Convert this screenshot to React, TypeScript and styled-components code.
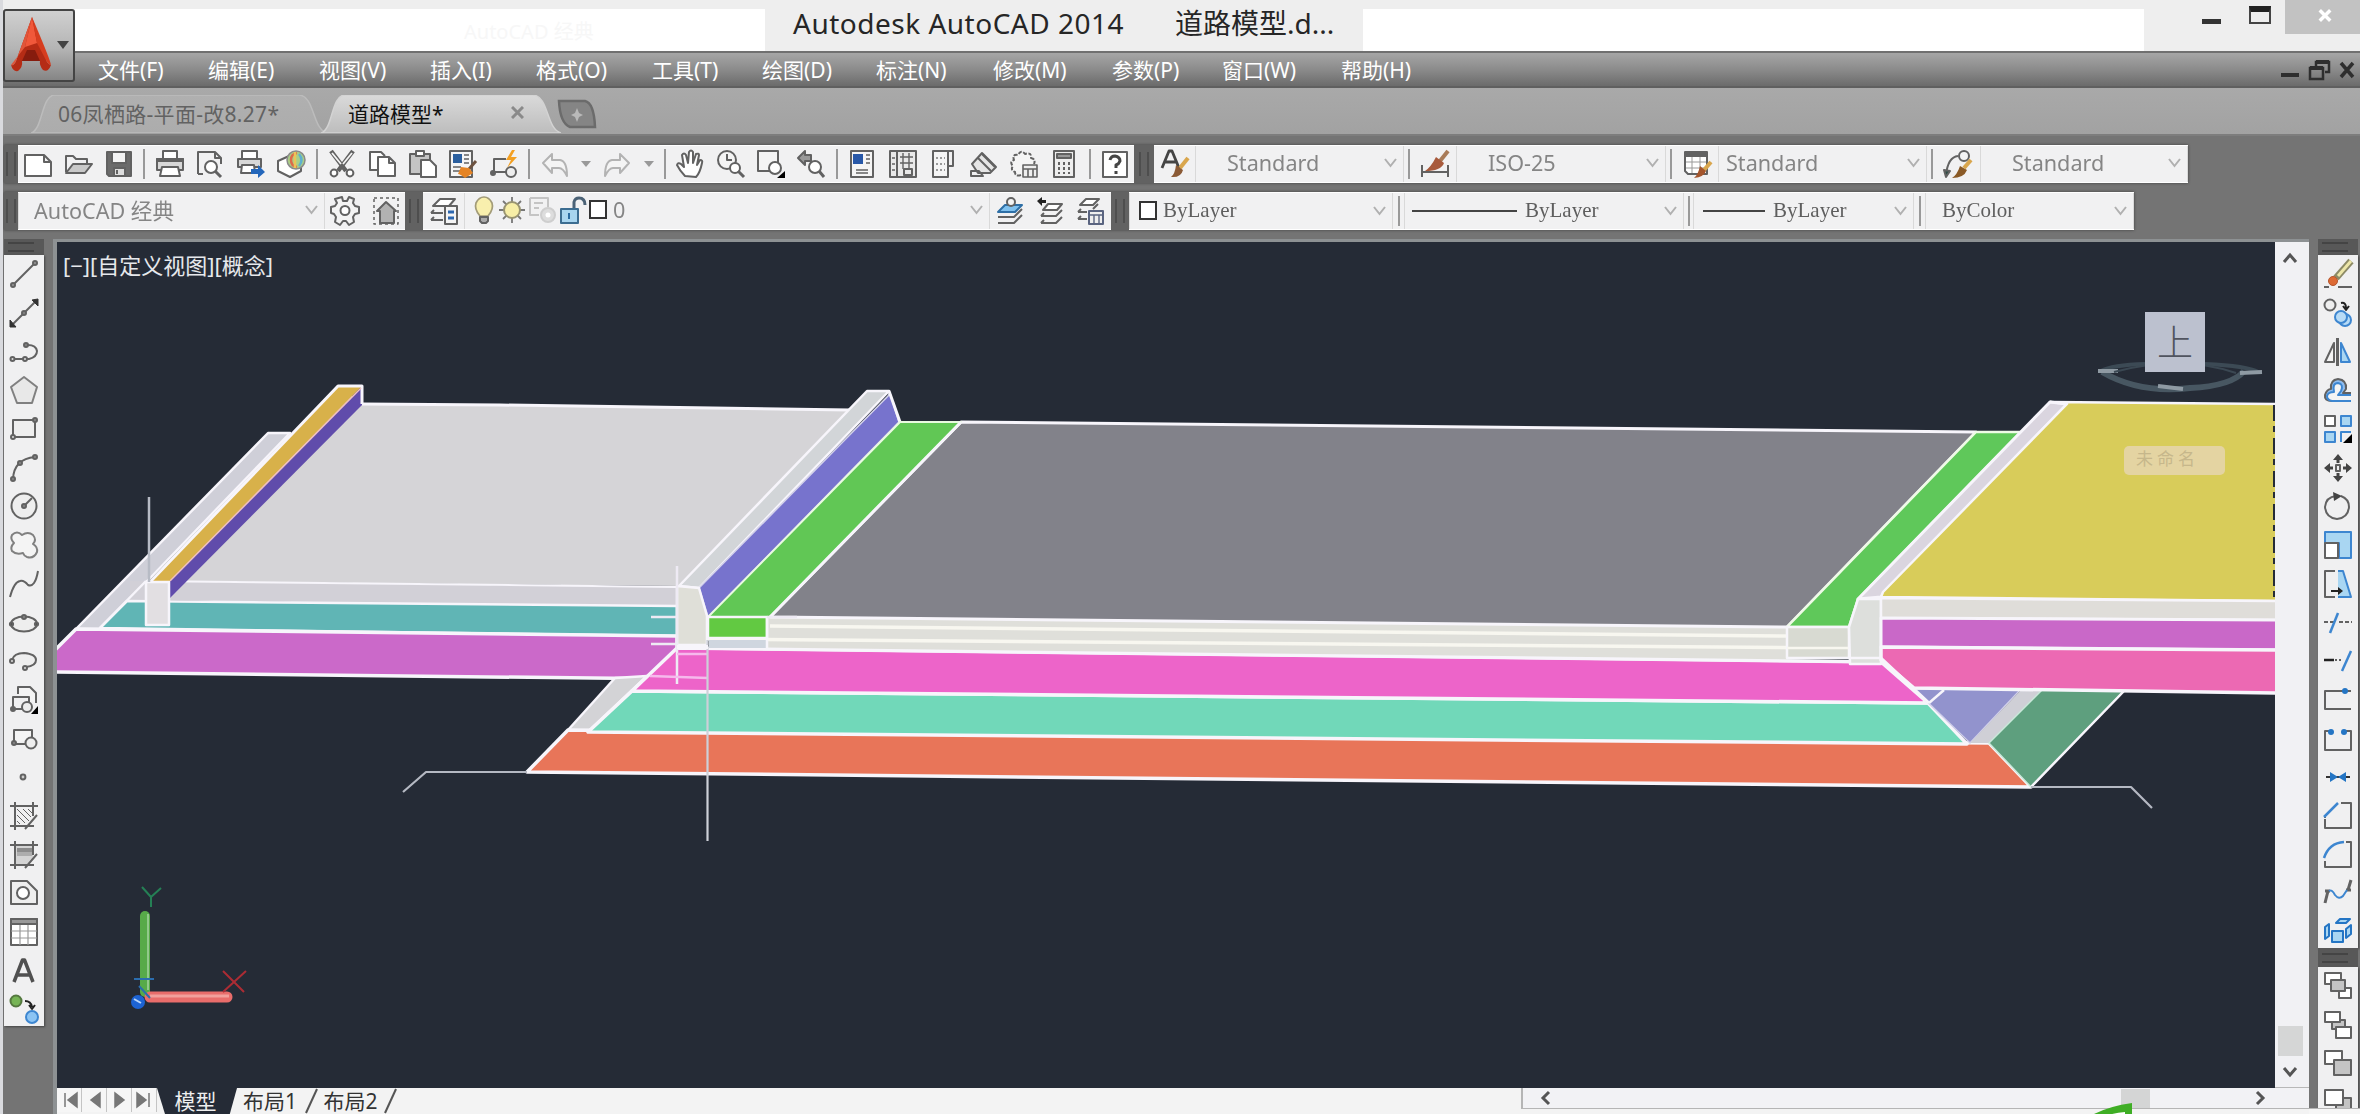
import React from "react";
import styled, { createGlobalStyle } from "styled-components";

const SANS = '"Noto Sans", "Noto Sans CJK SC", sans-serif';
const SERIF = '"Liberation Serif", "Noto Sans CJK SC", serif';

const Global = createGlobalStyle`
  html, body { margin: 0; padding: 0; background: #747474; }
  * { box-sizing: border-box; }
`;

/* ---------- icons (28 x 28 grid) ---------- */
const K = "#626262";
const B = "#3d86d0";
const L = "#a9d6f2";

const icons: Record<string, React.ReactNode> = {
  new: <path d="M1 5h19l7 7v14H1zM20 5v7h7" fill="#fff" />,
  open: (
    <>
      <path d="M1 22V6h7l3 3h11v5" />
      <path d="M1 23 8 14h19l-7 9z" fill="#c9c9c9" />
    </>
  ),
  save: (
    <>
      <path d="M2 2h24v24H4l-2-2z" fill="#6b6b6b" />
      <path d="M7 2h14v11H7z" fill="#f4f4f4" />
      <path d="M9 18h11v8H9z" fill="#ddd" />
      <path d="M12 20v4" />
    </>
  ),
  print: (
    <>
      <path d="M7 8V1h14v7" fill="#fff" />
      <path d="M1 9h26v11H1z" fill="#d8d8d8" />
      <path d="M1 9h26v2H1z" fill={K} />
      <path d="M6 17h16l2 9H4z" fill="#fff" />
    </>
  ),
  preview: (
    <>
      <path d="M2 24V2h17l6 6v6M2 24h5" />
      <path d="M19 2v6h6" />
      <circle cx="15" cy="17" r="6" fill="#fff" />
      <path d="m19 21 6 6" strokeWidth="3" />
    </>
  ),
  publish: (
    <>
      <path d="M5 8V1h15v7" fill="#fff" />
      <path d="M1 9h23v8H1z" fill="#d8d8d8" />
      <path d="M5 15h12l1 8H4z" fill="#fff" />
      <path d="M14 19h7v-4l7 7-7 6v-4h-7z" fill="#2467bb" stroke="none" />
    </>
  ),
  globe: (
    <>
      <path d="M1 11 12 6l12 5v10l-11 6-12-6z" fill="#fff" />
      <circle cx="19" cy="10" r="9" fill="#a9cf86" stroke="#8a8a8a" strokeWidth="1.500" />
      <path d="M20 3q-6 1-6 7t6 7" stroke="#dd6a4a" strokeWidth="2.500" />
      <path d="M18 2v16" stroke="#ecc458" strokeWidth="2.500" />
      <path d="M22 4q5 6 0 12" stroke="#5fb0cf" strokeWidth="2.500" />
    </>
  ),
  cut: (
    <>
      <path d="M3 1 18 21M25 1 10 21" strokeWidth="4.500" />
      <path d="M4 3 13 14M24 3l-9 11" stroke="#f4f4f4" strokeWidth="1.800" />
      <circle cx="6" cy="23" r="3.400" fill="#fff" />
      <circle cx="22" cy="23" r="3.400" fill="#fff" />
    </>
  ),
  copy: (
    <>
      <path d="M8 20H1V2h11l4 4" fill="#fff" />
      <path d="M9 7h11l6 6v13H9zM20 7v6h6" fill="#fff" />
    </>
  ),
  paste: (
    <>
      <path d="M1 4h20v20H1z" fill="#c4c4c4" />
      <path d="M7 1h8v5H7z" fill="#fff" />
      <path d="M12 10h9l6 6v11H12z" fill="#fff" />
    </>
  ),
  match: (
    <>
      <path d="M1 1h22v26H1z" fill="#f5f5f5" />
      <path d="M4 4h9v9H4z" fill="#2b5f9e" stroke="none" />
      <path d="M15 5h5M15 9h5M15 13h5M4 17h8M4 21h7" strokeWidth="1.400" />
      <path d="m27 11-7 8" stroke="#6c5240" strokeWidth="3" />
      <path d="m12 17 8 1 4 5-8 5q-5-4-7-4z" fill="#e58425" stroke="none" />
    </>
  ),
  blockedit: (
    <>
      <path d="M4 22V9h12M5 22h11" />
      <circle cx="3" cy="23" r="2" fill={K} />
      <circle cx="21" cy="22" r="5" fill="#eee" />
      <path d="m22 0-6 10h5l-4 8 10-11h-6l4-7z" fill="#f3a023" stroke="none" />
    </>
  ),
  undo: <path d="m2 13 9-9v6h8q7 1 7 16-4-8-8-8h-7v5z" fill="#f4f4f4" stroke="#b3b3b3" />,
  redo: <path d="m26 13-9-9v6H9q-7 1-7 16 4-8 8-8h7v5z" fill="#f4f4f4" stroke="#b3b3b3" />,
  hand: (
    <path
      d="M9 26Q4 21 1 15q1-3 4-1l3 3L6 5q2-3 4 0l2 8 1-11q2-3 4 0v11l3-9q3-1 3 1l-2 10 3-5q3 0 2 3-2 10-6 14z"
      fill="#fff"
    />
  ),
  zoomrt: (
    <>
      <circle cx="10" cy="10" r="9" fill="#f4f4f4" />
      <path d="M10 4v6h5" />
      <circle cx="18" cy="18" r="5" fill="#fff" />
      <path d="m21 21 6 6" strokeWidth="3" />
    </>
  ),
  zoomwin: (
    <>
      <path d="M1 1h20v20H1z" fill="#f4f4f4" />
      <circle cx="18" cy="18" r="6" fill="#fff" />
      <path d="M28 21v7h-8z" fill="#000" stroke="none" />
    </>
  ),
  zoomprev: (
    <>
      <path d="m1 8 7-7v4h6v6H8v4z" fill="#999" />
      <circle cx="18" cy="17" r="6" fill="#fff" />
      <path d="m22 21 5 6" strokeWidth="3" />
    </>
  ),
  props: (
    <>
      <path d="M3 1h22v26H3z" fill="#f5f5f5" />
      <path d="M5 4h10v10H5z" fill="#2858a8" stroke="none" />
      <path d="M18 5h4M18 9h4M18 13h4M8 20h12M8 23h12" strokeWidth="1.500" />
    </>
  ),
  designcenter: (
    <>
      <path d="M1 1h26v26H1zM8 1v26" fill="#e9e9e9" />
      <path d="M11 7h13M11 13h13M14 3v16M20 3v16M3 8h3M3 14h3M3 20h3" strokeWidth="1.400" />
      <path d="M15 19h8v6h-8z" />
    </>
  ),
  palette: (
    <>
      <path d="M4 1h15v26H4z" fill="#f5f5f5" />
      <path d="M19 1h5v15h-5" />
      <path d="M7 8h9M7 14h9M7 20h9" strokeDasharray="2 2" stroke="#999" />
    </>
  ),
  sheet: (
    <>
      <path d="M2 14 12 3l14 14-6 6H8z" fill="#e5e5e5" />
      <path d="m8 8 13 13M12 4l13 13M1 21h8l4 5H1z" />
    </>
  ),
  markup: (
    <>
      <path
        d="M11 25Q5 27 5 22 0 20 3 16-1 12 4 10 2 4 8 5q3-6 7-1 7-2 6 4 5 1 3 6"
        fill="#f5f5f5"
        strokeDasharray="4 1.500"
      />
      <path d="M13 15h14v12H13zM13 19h14M18 19v8M23 19v8" fill="#eee" strokeWidth="1.600" />
    </>
  ),
  calc: (
    <>
      <path d="M4 1h20v26H4z" fill="#eee" />
      <path d="M7 4h14v4H7z" fill="#999" />
      <path d="M9 12v12M14 12v12M19 12v12" strokeDasharray="3 2" />
    </>
  ),
  help: (
    <>
      <path d="M2 2h24v25H2z" fill="#fff" />
      <path d="M9 10q1-4 5-4 5 1 5 5-1 3-4 4v3M15 21v3" stroke="#444" strokeWidth="3" />
    </>
  ),
  textstyle: (
    <>
      <path d="m1 18 7-17h3l7 17M4 12h11" stroke="#444" strokeWidth="2.800" />
      <path d="M27 8 19 18" stroke="#d9a64d" strokeWidth="4" />
      <path d="m15 15 7 5q-2 8-12 7 4-3 5-12z" fill="#8b5a35" stroke="none" />
    </>
  ),
  dimstyle: (
    <>
      <path d="M1 15v12M27 15v12M1 22h26" />
      <path d="M27 1 19 11" stroke="#a87b58" strokeWidth="4" />
      <path d="m15 7 8 6q-3 8-19 8 6-4 11-14z" fill="#a85a3c" stroke="none" />
    </>
  ),
  tablestyle: (
    <>
      <path d="M2 2h22v22H5l-3-3z" fill="#fff" />
      <path d="M2 3h22v3H2z" fill={K} />
      <path d="M9 7v16M17 7v16M3 12h20M3 18h20" strokeWidth="1" stroke="#999" />
      <path d="m28 12-7 8" stroke="#d9a64d" strokeWidth="4" />
      <path d="m17 16 6 5q-2 6-12 7 4-3 6-12z" fill="#a4552c" stroke="none" />
    </>
  ),
  mleader: (
    <>
      <path d="M2 25Q4 7 14 6" />
      <path d="m0 20 2 7 4-6z" fill="#2e4d46" />
      <circle cx="20" cy="6" r="5" fill="#f4f4f4" />
      <path d="m27 10-7 8" stroke="#d9a64d" strokeWidth="4" />
      <path d="m16 16 7 4q-3 8-15 8 5-3 8-12z" fill="#8a5a26" stroke="none" />
    </>
  ),
  gear: (
    <>
      <path
        d="m11 0 1 4h4l2-4 5 2-1 4 2 3 4 1v6l-4 1-2 3 1 5-5 3-3-4h-3l-3 4-5-3 1-5-2-3-3-1v-6l4-1 2-3-2-4z"
        fill="#f4f4f4"
      />
      <circle cx="14" cy="13.500" r="4.500" fill="#fff" />
    </>
  ),
  homews: (
    <>
      <path d="M2 1h24v26H2z" strokeDasharray="3 3" strokeWidth="1.500" />
      <path d="m5 14 9-9 10 9h-2v12H8V14z" fill="#b2b2b2" />
    </>
  ),
  layerprops: (
    <>
      <path d="M3 9 10 2h15l-6 7z" fill="#fff" />
      <path d="M1 16h12M4 13l-3 3M1 23h12M4 20l-3 3" />
      <path d="M15 9h12v18H15z" fill="#f4f4f4" />
      <path d="M18 15h6M18 21h6" stroke="#2c67b0" strokeWidth="3" />
    </>
  ),
  bulb: (
    <>
      <path d="M10 20Q4 13 6 7q3-6 8-6t8 6q2 6-4 13z" fill="#f8efad" stroke="#a29b78" strokeWidth="1.700" />
      <path d="M10 21h8v4l-2 2h-4l-2-2z" fill="#aaa" />
    </>
  ),
  sun: (
    <>
      <path d="M14 1v26M1 14h26M5 5l18 18M23 5 5 23" strokeWidth="1.800" stroke="#777" />
      <circle cx="14" cy="14" r="8" fill="#f7eea6" stroke="#999471" />
    </>
  ),
  freeze: (
    <>
      <path d="M2 2h18v9M2 2v17h9M6 7h9M6 12h5" stroke="#c4c4c4" />
      <circle cx="20" cy="19" r="7" fill="#ddd" stroke="#cecece" />
      <circle cx="20" cy="19" r="2.500" fill="#fff" stroke="none" />
    </>
  ),
  unlock: (
    <>
      <path d="M15 13V6q1-4 5-4 6 0 6 7" strokeWidth="3" stroke="#4b6276" />
      <path d="M2 13h17v14H2z" fill="#a8d5ef" stroke="#3b6c90" />
      <path d="M10 17v6" stroke="#296aa0" />
    </>
  ),
  layercurrent: (
    <>
      <path d="m2 15 7-7h17l-7 7z" fill="#7fc1ef" stroke="#2e6fa6" />
      <circle cx="15" cy="5" r="4" fill="#f4f4f4" />
      <path d="M2 20h16l8-8M2 26h16l8-8" />
    </>
  ),
  layerprev: (
    <>
      <path d="m6 13 5-6h14l-5 6z" fill="#fff" />
      <path d="M4 19h15l6-6M4 26h15l6-6M4 19l3-3M4 26l3-3" />
      <path d="m0 4 5-4v3h4v3H5v3z" fill="#222" stroke="none" />
    </>
  ),
  layerstate: (
    <>
      <path d="M4 8 10 2h13l-6 6z" fill="#fff" />
      <path d="M2 15h9M5 12l-3 3M2 22h9M5 19l-3 3M17 12l5-5" />
      <path d="M13 14h14v13H13z" fill="#eee" stroke="#5a6480" />
      <path d="M13 18h14M18 18v9M23 18v9" stroke="#5a6480" strokeWidth="1.400" />
    </>
  ),
  line: (
    <>
      <path d="M3 25 25 3" />
      <circle cx="3" cy="25" r="2" fill="#999" />
      <circle cx="25" cy="3" r="2" fill="#999" />
    </>
  ),
  xline: (
    <>
      <path d="M3 25 25 3" />
      <path d="M0 28v-7l6 7zM28 0v7l-6-6z" fill="#333" stroke="#333" strokeWidth="1" />
      <circle cx="14" cy="14" r="2" fill="#888" />
    </>
  ),
  pline: (
    <>
      <path d="M3 21h16q8-2 8-8-1-6-9-6h-2" />
      <circle cx="2.500" cy="21" r="2" fill="#ddd" />
      <circle cx="15" cy="21" r="2" fill="#ddd" />
      <circle cx="16" cy="7" r="2" fill="#888" />
    </>
  ),
  polygon: <path d="m14 1 13 10-5 16H7L1 11z" fill="#e8e8e8" stroke="#808080" />,
  rect: (
    <>
      <path d="M3 5h22v17H3z" fill="#eee" />
      <circle cx="3" cy="22" r="2" fill="#ddd" />
      <circle cx="25" cy="5" r="2" fill="#888" />
    </>
  ),
  arc: (
    <>
      <path d="M3 25Q4 5 25 3" />
      <circle cx="3" cy="25" r="2" fill="#888" />
      <circle cx="10" cy="9" r="2" fill="#888" />
      <circle cx="25" cy="3" r="2" fill="#888" />
    </>
  ),
  circle: (
    <>
      <circle cx="14" cy="14" r="12.500" fill="#eee" />
      <path d="m14 14 8-8" />
      <circle cx="14" cy="14" r="2" fill="#888" />
    </>
  ),
  cloud: (
    <path
      d="M12 4q6-4 11 0 4 5 0 9 5 3 4 8-3 7-10 5-3-1-4-4-7 2-11-2-2-4 2-8Q0 8 2 4q5-5 10 0z"
      fill="#f4f4f4"
      stroke="#808080"
    />
  ),
  spline: <path d="M0 27Q4 12 10 11q4-1 8 4 7 3 10-14" />,
  ellipse: (
    <>
      <ellipse cx="14" cy="15" rx="13" ry="7.500" fill="#eee" />
      <circle cx="1.500" cy="15" r="1.600" fill="#444" />
      <circle cx="26.500" cy="15" r="1.600" fill="#444" />
      <circle cx="14" cy="8" r="2" fill="#888" />
    </>
  ),
  ellipsearc: (
    <>
      <path d="M2 13Q4 6 14 6q12 1 12 7 0 6-10 7" fill="#eee" />
      <circle cx="2" cy="14" r="2" fill="#ddd" />
      <circle cx="15" cy="21" r="2" fill="#ddd" />
    </>
  ),
  insert: (
    <>
      <path d="M8 8V1h12l6 6v10" fill="#f4f4f4" />
      <path d="M3 22V11h16v8M4 23h9" />
      <circle cx="3" cy="23" r="2" fill={K} />
      <circle cx="17" cy="21" r="5" fill="#eee" />
      <path d="M28 20v8h-7z" fill="#000" stroke="none" />
    </>
  ),
  block: (
    <>
      <path d="M4 18V5h18v9M4 19h11" fill="#f4f4f4" />
      <circle cx="4" cy="18" r="2" fill="#888" />
      <circle cx="21" cy="18" r="5.500" fill="#eee" />
    </>
  ),
  point: <circle cx="13" cy="14" r="2.400" fill="#ccc" />,
  hatch: (
    <>
      <path d="M0 4h28M0 24h24M5 0v28M23 0v14M27 13 15 27" />
      <path d="m7 7 12 12M7 13l8 8M13 7l8 8M7 19l3 3M18 7l4 4" strokeWidth="1" />
    </>
  ),
  gradient: (
    <>
      <path d="M5 4h18v12l-7 8H5z" fill="#d4d4d4" stroke="none" />
      <path d="M7 7h15v4H7z" fill="#8c8c8c" stroke="none" />
      <path d="M7 11h15v4H7z" fill="#adadad" stroke="none" />
      <path d="M0 4h28M0 24h24M5 0v28M23 0v14M27 13 15 27" />
    </>
  ),
  region: (
    <>
      <path d="M1 2h16l10 10v13H1z" fill="#eee" />
      <circle cx="13" cy="14" r="6" fill="#fff" />
    </>
  ),
  table: (
    <>
      <path d="M1 1h26v26H1z" fill="#fff" />
      <path d="M1 1h26v5H1z" fill="#999" />
      <path d="M10 7v20M18 7v20M1 13h26M1 20h26" strokeWidth="1.200" stroke="#999" />
    </>
  ),
  mtext: <path d="M4 25 12.500 3h2L23 25M7 18h13" stroke="#505050" strokeWidth="3.500" />,
  addsel: (
    <>
      <circle cx="6" cy="6" r="5.500" fill="#76b455" stroke="#54783f" />
      <path d="M15 6q6 0 7 6m-3-2 3 4 3-4" stroke="#222" />
      <circle cx="22" cy="22" r="6" fill="#8cc4f3" stroke={B} />
    </>
  ),
  erase: (
    <>
      <path d="M27 1 12 18" stroke="#8c8a66" strokeWidth="7" />
      <path d="M27 1 14 16" stroke="#ece6a8" strokeWidth="3" />
      <circle cx="9" cy="21" r="4.500" fill="#dd6a34" stroke="#b4552d" strokeWidth="1" />
      <path d="M0 27h5M14 27h14" />
    </>
  ),
  copyobj: (
    <>
      <circle cx="6" cy="6" r="5.500" fill="#eee" />
      <path d="M17 4q5-1 5 5m-3-2 3 4 3-4" stroke="#222" />
      <circle cx="21" cy="21" r="6" fill="#b7dbf6" stroke={B} />
      <circle cx="17" cy="18" r="6" fill="#b7dbf6" stroke={B} />
    </>
  ),
  mirror: (
    <>
      <path d="M10 5v19H1z" fill="#f4f4f4" />
      <path d="M13.500 0v28" strokeWidth="3" />
      <path d="M17 5v19h9z" fill={L} stroke={B} />
    </>
  ),
  offset: (
    <>
      <path d="M27 25H8Q0 25 1 19q2-6 6-6-1-9 7-10 9 1 8 10l-3 4h8" fill="#8fbdf0" stroke={K} strokeWidth="2" />
      <path d="M27 25H8q-5-1-5-5 1-4 7-4-2-9 4-9 6 1 3 8l-3 4h13" stroke={B} strokeWidth="2" fill="#f4f4f4" />
    </>
  ),
  array: (
    <>
      <path d="M1 1h10v10H1z" fill="#fff" />
      <path d="M17 1h10v10H17zM1 17h10v10H1z" fill={L} stroke={B} />
      <path d="M17 27V17h10" stroke={B} />
      <path d="M28 19v9h-9z" fill="#000" stroke="none" />
    </>
  ),
  move: (
    <>
      <path d="M14 3v6M14 19v6M3 14h6M19 14h6" stroke="#444" strokeWidth="3" />
      <path d="m14 0 5 6H9zM14 28l5-6H9zM0 14l6-5v10zM28 14l-6-5v10z" fill="#444" stroke="none" />
      <path d="M12 11h4v6h-4z" />
    </>
  ),
  rotate: (
    <>
      <path d="M12 4Q2 5 1 15q1 11 12 12 11-1 12-12 0-8-8-11" />
      <path d="m9 0 9 4-8 5z" fill="#444" stroke="none" />
    </>
  ),
  scale: (
    <>
      <path d="M1 1h26v26H15V12H1z" fill={L} stroke={B} />
      <path d="M1 12h13v15H1z" fill="#fff" />
    </>
  ),
  stretch: (
    <>
      <path d="M11 1H1v26h10" />
      <path d="M14 1h5l8 26H14" fill={L} stroke={B} />
      <path d="M7 20h7v-3l5 4-5 4v-3H7z" fill="#222" stroke="none" />
    </>
  ),
  trim: (
    <>
      <path d="M0 13h10M15 13h13" strokeDasharray="4 2" />
      <path d="M14 4 6 24" stroke={B} strokeWidth="2.500" />
    </>
  ),
  extend: (
    <>
      <path d="M0 13h10" stroke="#222" strokeWidth="2.500" />
      <path d="M11 13h8" strokeDasharray="2 2" />
      <path d="M27 4 18 24" stroke={B} strokeWidth="2.500" />
    </>
  ),
  breakpt: (
    <>
      <path d="M27 23H1V5h26" />
      <circle cx="21" cy="5" r="3" fill="#2475c4" stroke="none" />
    </>
  ),
  breakobj: (
    <>
      <path d="M7 6H1v19h26V6h-6" />
      <circle cx="7" cy="7" r="3" fill="#2475c4" stroke="none" />
      <circle cx="20" cy="7" r="3" fill="#2475c4" stroke="none" />
    </>
  ),
  join: (
    <>
      <path d="M2 14h24" stroke="#333" />
      <path d="m6 9 8 5-8 5zM22 9l-8 5 8 5z" fill="#2475c4" stroke="none" />
    </>
  ),
  chamfer: (
    <>
      <path d="M17 1h10v25H1v-9M1 14v2" />
      <path d="M0 15 14 1" stroke={B} strokeWidth="2.500" />
    </>
  ),
  fillet: (
    <>
      <path d="M22 1h5v25H1v-6" />
      <path d="M0 17Q5 2 20 1" stroke={B} strokeWidth="2.500" />
    </>
  ),
  blend: (
    <>
      <path d="M1 24 4 12M24 11 27 1" strokeWidth="3" />
      <path d="M1 12h5M22 11h5" strokeWidth="3" />
      <path d="M5 12q3-2 6 4 4 5 8 1l4-6" stroke={B} />
    </>
  ),
  explode: (
    <path d="M8 13h11v11H8zM12 5l4-4h10l-4 4zM1 9l4-3v12l-4 3zM22 11l5-4v9l-5 4z" fill={L} stroke="#2475c4" />
  ),
  orderA: (
    <>
      <path d="M1 1h16v11H1zM15 16h12v10H15z" fill="#fff" />
      <path d="M7 8h14v11H7z" fill="#c4c4c4" />
    </>
  ),
  orderB: (
    <>
      <path d="M8 9h13v9H8z" fill="#c4c4c4" />
      <path d="M1 1h15v10H1zM12 16h15v11H12z" fill="#fff" />
    </>
  ),
  orderC: (
    <>
      <path d="M1 1h17v13H1z" fill="#fff" />
      <path d="M10 10h17v15H10z" fill="#c4c4c4" />
    </>
  ),
  orderD: (
    <>
      <path d="M12 10h15v14H12z" fill="#c4c4c4" />
      <path d="M1 2h18v15H1z" fill="#fff" />
    </>
  ),
};

const Svg28 = styled.svg`
  width: 28px;
  height: 28px;
  flex: none;
  overflow: visible;
`;

const Icon = ({ name }: { name: string }) => (
  <Svg28 viewBox="0 0 28 28" fill="none" stroke={K} strokeWidth={2} strokeLinejoin="round">
    {icons[name]}
  </Svg28>
);

/* ---------- window frame ---------- */
const Window = styled.div`
  position: relative;
  width: 2360px;
  height: 1114px;
  overflow: hidden;
  display: flex;
  flex-direction: column;
  background: #747474;
  font-family: ${SANS};
  border-left: 3px solid #d9dade;
`;

const TitleBar = styled.header`
  height: 51px;
  flex: none;
  display: flex;
  align-items: flex-end;
  background: #eeeeee;
`;
const TitleWhite = styled.div<{ $w: number }>`
  width: ${(p) => p.$w}px;
  height: 42px;
  background: #fff;
  display: flex;
  align-items: center;
  padding-left: 461px;
  color: #f7f7f7;
  font-size: 20px;
  white-space: nowrap;
`;
const TitleText = styled.div`
  width: 598px;
  height: 51px;
  padding: 4px 0 0 28px;
  display: flex;
  gap: 51px;
  font-size: 28px;
  line-height: 39px;
  color: #262626;
  white-space: nowrap;
`;
const TitleName = styled.span`
  letter-spacing: 0.5px;
`;
const WindowButtons = styled.div`
  flex: 1;
  align-self: stretch;
  display: flex;
  align-items: flex-start;
`;
const MinButton = styled.i`
  width: 19px;
  height: 5px;
  margin: 19px 28px 0 58px;
  background: #333;
`;
const MaxButton = styled.i`
  width: 22px;
  height: 18px;
  margin: 6px 14px 0 0;
  border: 2px solid #444;
  border-top: 6px solid #222;
`;
const CloseButton = styled.div`
  flex: 1;
  height: 34px;
  background: #c2c2c2;
  display: flex;
  align-items: center;
  justify-content: center;
  padding: 0 0 3px 5px;
`;

const AppButton = styled.div`
  position: absolute;
  left: 0;
  top: 9px;
  width: 72px;
  height: 73px;
  border: 2px solid #444;
  border-radius: 3px;
  background: linear-gradient(#d0d0d0, #b4b4b4 55%, #858585);
  display: flex;
  align-items: center;
  padding-left: 4px;
`;

const MenuBar = styled.nav`
  height: 37px;
  flex: none;
  display: flex;
  align-items: center;
  padding-left: 95px;
  border-top: 2px solid #707070;
  border-bottom: 2px solid #5f5f5f;
  background: linear-gradient(#a6a6a6, #8b8b8b 50%, #6b6b6b);
`;
const MenuItem = styled.span<{ $w: number }>`
  width: ${(p) => p.$w}px;
  flex: none;
  font-size: 21px;
  line-height: 30px;
  color: #fff;
  white-space: nowrap;
`;
const MdiButtons = styled.div`
  margin-left: auto;
  width: 84px;
  display: flex;
`;

const TabStrip = styled.div`
  height: 48px;
  flex: none;
  display: flex;
  align-items: flex-start;
  padding: 7px 0 0 28px;
  background: linear-gradient(#a9a9a9, #a2a2a2);
  border-bottom: 2px solid #7d7d7d;
`;
const TabShape = styled.div<{ $w: number; $active?: boolean }>`
  position: relative;
  width: ${(p) => p.$w}px;
  height: 38px;
  margin-right: -6px;
  display: flex;
  align-items: center;
  padding: 0 37px 3px 27px;
  justify-content: space-between;
  font-size: 21px;
  letter-spacing: ${(p) => (p.$active ? 0 : 0.3)}px;
  white-space: nowrap;
  color: ${(p) => (p.$active ? "#111" : "#626262")};
  z-index: ${(p) => (p.$active ? 2 : 1)};
`;
const TabBack = styled.svg`
  position: absolute;
  inset: 0;
  z-index: -1;
`;

const Tab = ({ w, active, children }: { w: number; active?: boolean; children: React.ReactNode }) => (
  <TabShape $w={w} $active={active}>
    <TabBack width={w} height={38}>
      <defs>
        <linearGradient id={active ? "ta" : "ti"} x1="0" y1="0" x2="0" y2="1">
          <stop offset="0" stopColor={active ? "#dadada" : "#b0b0b0"} />
          <stop offset="1" stopColor={active ? "#bdbdbd" : "#acacac"} />
        </linearGradient>
      </defs>
      <path
        d={`M0 38C12 35 10 0 24 0H${w - 28}C${w - 12} 1 ${w - 15} 34 ${w} 38z`}
        fill={`url(#${active ? "ta" : "ti"})`}
        stroke={active ? "#d3d3d3" : "#bcbcbc"}
        strokeWidth="1.500"
      />
    </TabBack>
    {children}
  </TabShape>
);

/* ---------- toolbars ---------- */
const ToolbarArea = styled.div`
  height: 103px;
  flex: none;
  display: flex;
  flex-direction: column;
  gap: 9px;
  padding: 9px 0 0 1px;
`;
const ToolbarRow = styled.div`
  height: 38px;
  display: flex;
  filter: drop-shadow(0 0 1.500px #3e3e3e);
`;
const Grip = styled.div<{ $w: number }>`
  width: ${(p) => p.$w}px;
  flex: none;
  background: #626262;
  display: flex;
  align-items: center;
  justify-content: center;
  &::after {
    content: "";
    width: 6px;
    height: 24px;
    border: solid #4e4e4e;
    border-width: 0 2px;
  }
`;
const Bar = styled.div<{ $w: number }>`
  width: ${(p) => p.$w}px;
  flex: none;
  display: flex;
  align-items: center;
  background: #f1f1f2;
  border-top: 1px solid #fff;
  border-bottom: 1px solid #fff;
`;
const Cell = styled.div<{ $w?: number }>`
  width: ${(p) => p.$w ?? 40.4}px;
  flex: none;
  display: flex;
  align-items: center;
  justify-content: center;
`;
const Sep = styled.div<{ $w?: number }>`
  width: ${(p) => p.$w ?? 10.6}px;
  flex: none;
  height: 30px;
  display: flex;
  justify-content: center;
  &::after {
    content: "";
    width: 2px;
    height: 30px;
    background: #999;
  }
`;
const Combo = styled.div<{ $w: number; $pad?: number; $serif?: boolean }>`
  width: ${(p) => p.$w}px;
  height: 36px;
  flex: none;
  display: flex;
  align-items: center;
  padding: 0 6px ${(p) => (p.$serif ? 1 : 3)}px ${(p) => p.$pad ?? 8}px;
  border-left: 1px solid #d9d9d9;
  border-right: 1px solid #d9d9d9;
  font-family: ${(p) => (p.$serif ? SERIF : SANS)};
  font-size: ${(p) => (p.$serif ? 21 : 21.6)}px;
  color: ${(p) => (p.$serif ? "#5e5e5e" : "#858585")};
  white-space: nowrap;
`;
const Chevron = styled.svg`
  width: 13px;
  height: 10px;
  margin-left: auto;
  flex: none;
`;
const Down = () => (
  <Chevron viewBox="0 0 13 10" fill="none" stroke="#b0b0b0" strokeWidth="2">
    <path d="m1 1 5.500 7L12 1" />
  </Chevron>
);
const Swatch = styled.i`
  width: 18px;
  height: 19px;
  margin-right: 6px;
  border: 2px solid #333;
  background: #fff;
`;
const LineSample = styled.i<{ $w: number }>`
  width: ${(p) => p.$w}px;
  height: 2px;
  margin-right: 8px;
  background: #444;
`;
const SmallArrow = styled.i`
  border: 5px solid transparent;
  border-top: 6px solid #999;
  border-bottom: 0;
`;

/* ---------- workspace ---------- */
const Workspace = styled.div`
  flex: 1;
  display: flex;
  min-height: 0;
`;
const SideBar = styled.aside<{ $w: number; $inset: number }>`
  width: ${(p) => p.$w}px;
  flex: none;
  padding-left: ${(p) => p.$inset}px;
`;
const SideGrip = styled.div<{ $h: number }>`
  height: ${(p) => p.$h}px;
  width: 40px;
  background: #585858;
  display: flex;
  align-items: center;
  padding-left: 4px;
  &::after {
    content: "";
    width: 26px;
    height: 6px;
    border: solid #444;
    border-width: 2px 0;
  }
`;
const SideTools = styled.div<{ $h: number }>`
  width: 40px;
  height: ${(p) => p.$h}px;
  overflow: hidden;
  background: #f0f0f1;
  box-shadow: 1px 1px 2px #444;
`;
const SideFoot = styled.div`
  height: 6px;
  margin-left: -9px;
  background: #f6f6f6;
  border-top: 1px solid #b5b5b5;
`;
const SideCell = styled.div`
  height: 38.7px;
  display: flex;
  align-items: center;
  justify-content: center;
  padding-right: 1px;
`;
const Center = styled.main`
  width: 2256px;
  flex: none;
  display: flex;
  flex-direction: column;
  border-left: 4px solid #8d9193;
  border-top: 3px solid #8d9193;
`;
const ViewRow = styled.div`
  height: 846px;
  flex: none;
  display: flex;
`;
const Viewport = styled.section`
  position: relative;
  width: 2218px;
  height: 846px;
  background: #252b36;
`;
const Drawing = styled.svg`
  display: block;
`;
const ViewLabel = styled.div`
  position: absolute;
  left: 6px;
  top: 8px;
  font-size: 22px;
  line-height: 30px;
  color: #e6e8ec;
  white-space: nowrap;
`;
const CubeFace = styled.div`
  position: absolute;
  left: 2088px;
  top: 70px;
  width: 60px;
  height: 60px;
  background: #bcc1cf;
  color: #50545f;
  font-size: 36px;
  font-weight: 300;
  line-height: 61px;
  text-align: center;
`;
const UcsTag = styled.div`
  position: absolute;
  left: 2067px;
  top: 204px;
  width: 101px;
  height: 29px;
  border-radius: 5px;
  background: #e4d4a2;
  color: #c6b78b;
  font-size: 17px;
  line-height: 26px;
  letter-spacing: 4px;
  padding-left: 12px;
  white-space: nowrap;
`;
const VScroll = styled.div`
  width: 34px;
  display: flex;
  flex-direction: column;
  align-items: center;
  justify-content: space-between;
  padding: 10px 4px 9px 0;
  background: #f1f1f4;
  border-bottom: 1px solid #b8b8b8;
`;
const VThumb = styled.div`
  width: 25px;
  height: 30px;
  margin: auto 0 10px;
  background: #d5d6d6;
`;
const Arrow = styled.svg`
  flex: none;
`;
const BottomRow = styled.div`
  height: 26px;
  flex: none;
  display: flex;
  background: #f3f3f3;
`;
const NavButton = styled.div`
  width: 25px;
  height: 24px;
  display: flex;
  align-items: center;
  justify-content: center;
  border-right: 1px solid #c4c4c4;
  background: #f6f6f6;
`;
const LayoutTab = styled.div<{ $w: number; $model?: boolean }>`
  width: ${(p) => p.$w}px;
  height: 26px;
  font-size: 21px;
  line-height: 26px;
  text-align: center;
  white-space: nowrap;
  padding-right: ${(p) => (p.$model ? 3 : 0)}px;
  color: ${(p) => (p.$model ? "#eee" : "#333")};
  background: ${(p) => (p.$model ? "#252b36" : "transparent")};
  clip-path: ${(p) => (p.$model ? "polygon(0 0, 100% 0, 91% 100%, 10% 100%)" : "none")};
`;
const Slash = styled.svg`
  flex: none;
`;
const HScroll = styled.div`
  margin-left: auto;
  width: 788px;
  height: 21px;
  display: flex;
  align-items: center;
  border-left: 2px solid #b5b5b5;
  border-bottom: 1px solid #b5b5b5;
  padding: 0 43px 0 17px;
  background: #f2f2f5;
`;
const HThumb = styled.div`
  width: 29px;
  height: 19px;
  margin: 0 104px 0 auto;
  background: #d4d5d5;
`;
const GreenMark = styled.svg`
  position: absolute;
  left: 2087px;
  top: 1102px;
`;

const W = "#f7f5fb";
const P = ({ d, f, s = W, w = 2.5 }: { d: string; f?: string; s?: string; w?: number }) => (
  <path d={d} fill={f ?? "none"} stroke={s} strokeWidth={w} />
);

const RoadModel = () => (
  <Drawing width={2218} height={846} viewBox="57 242 2218 846" strokeLinejoin="round">
    {/* left footway */}
    <P d="M268 433H290L101 629H76z" f="#cfcfd8" />
    <P d="M152 581 338 385 362 404 850 410 680 586 146 581 100 628z" f="#d5d4d7" s="none" />
    <P d="M362 404 500 405 850 410" w={3} />
    <P d="M130 581 677 587V607L130 600z" f="#d2d0d7" s="none" />
    <P d="M127 601 677 606V636L100 628z" f="#60b5b5" />
    <P d="M146 581 100 628" />
    <P d="M146 581 677 587" w={2} />
    <P d="M50 655 76 629 677 636V679L50 672z" f="#cb69c9" w={3.5} />
    <path d="M152 581 338 385 362 386 170 581z" fill="#d8b14a" />
    <path d="M170 581 362 387V405L170 598z" fill="#604cab" />
    <P d="M151 581 338 386H362V404" w={3} />
    <path d="M170 581 361 388" stroke="#f0bfc0" strokeWidth="1.500" />
    <P d="M146 582H169V625H146z" f="#e2dfe2" />
    <P d="M149 497V582" s="#b7bbc5" />

    {/* carriageway structure */}
    <P d="M615 678 568 730 588 732 647 676z" f="#d3d3d6" />
    <P d="M568 730 527 772 2031 787 1989 743z" f="#e87559" w={3.5} />
    <P d="M632 691 588 732 1967 744 1928 703z" f="#71d8b9" w={3.5} />
    <P d="M677 648 632 691 1928 703 1881 662z" f="#ed64c9" w={3.5} />
    <P d="M764 616 1787 627V661L764 650z" f="#dfdfda" s="none" />
    <P d="M961 422 770 617 1787 627 1976 432z" f="#82828a" w={3} />
    <P d="M770 626 1787 636M708 639 1849 648" s="#f8f7f0" w={3.5} />
    <P d="M677 648 1881 662" w={3} />

    {/* left kerb and gutter */}
    <P d="M867 391H889L699 588 679 586z" f="#d2d5d8" />
    <P d="M888 396 890 393 899 422 708 617 699 588z" f="#7773cd" s="#d3d2ea" w={1.6} />
    <P d="M889 391 900 422" w={3} />
    <P d="M900 422H961L770 617H708z" f="#61c755" s="#e9fae0" w={2} />
    <P d="M961 422 770 617" w={3} />
    <P d="M708 617H767V638H708z" f="#62c942" />
    <path d="M709 640H766V648H709z" fill="#cfd6df" />
    <P d="M767 617V649" />
    <P d="M677 586 699 588 707 616V645H677z" f="#dfdfd8" />
    <P d="M677 566V684M651 617H677M651 644H677M767 617H797" s="#eeeaf4" />
    <P d="M677 654H708M650 676 708 678" s="#f6b9ec" />
    <P d="M707.500 640V841" w={2.2} s="#cdd0d8" />
    <P d="M677 647H708" w={4} />

    {/* right slope below kerb */}
    <P d="M1914 689H2021L1970 743z" f="#9293cd" s="#d0cfeb" w={1.5} />
    <P d="M1944 690 1929 703" />
    <P d="M2021 690H2042L1989 743H1970z" f="#cfcfd6" s="none" />
    <P d="M2042 690 2124 691 2031 787 1989 743z" f="#5e9f7e" s="#c9e8d9" w={1.5} />
    <P d="M2124 691 2031 787" />

    {/* right kerb and green belt */}
    <P d="M1976 432H2021L1858 599 1849 627H1787z" f="#5fc85a" s="#eefbe6" />
    <P d="M1787 627H1849V658H1787z" f="#d8dad2" />
    <P d="M1787 648H1849" s="#f8f7f0" />
    <P d="M2050 402 2067 404 1881 597 1858 599z" f="#dad5df" w={3} />
    <P d="M1858 599H1881V664H1850L1849 627z" f="#dddfdc" />
    <P d="M1850 658H1881" />
    <P d="M2050 402 2280 404V601L1881 597 1883 592 2067 404z" f="#d8cc5a" />
    <P d="M1881 598 2280 601V620L1881 618z" f="#dfddd9" />
    <P d="M1881 618 2280 620V650L1881 647z" f="#c968c8" w={3} />
    <P d="M1881 647 2280 650V693L1914 688 1881 660z" f="#ec69b3" w={3.5} />
    <P d="M1881 658 1929 703" w={3} />
    <path d="M2274 405V600" stroke="#252b36" strokeWidth="2" strokeDasharray="16 5 6 6" />
    <P d="M403 792 426 772H527M2031 787H2131L2152 808" s="#b5b9c3" w={2.2} />

    {/* compass ring */}
    <path d="M2101 371Q2112 365 2145 364M2205 364Q2248 366 2258 372" stroke="#3c4a55" strokeWidth="4" fill="none" />
    <path d="M2102 372Q2140 394 2190 388 2232 386 2244 371" stroke="#485762" strokeWidth="6" fill="none" />
    <path d="M2098 371H2118M2240 373 2262 372M2158 386 2183 389" stroke="#8f9aa3" strokeWidth="4" />
    <path d="M2114 372Q2180 354 2236 373" stroke="#3b4853" strokeWidth="2" fill="none" />

    {/* UCS icon */}
    <path d="M145 916V992" stroke="#57aa49" strokeWidth="10" strokeLinecap="round" />
    <path d="M148 914V990" stroke="#92c98b" strokeWidth="2" />
    <path d="M150 997H227" stroke="#e96d6b" strokeWidth="11" strokeLinecap="round" />
    <path d="M150 996H229" stroke="#f2a09c" strokeWidth="3" />
    <path d="M142 887 151 897 161 888M151 897V907" stroke="#258055" strokeWidth="2" fill="none" />
    <path d="M223 971 244 992M246 971 223 992" stroke="#ac2c34" strokeWidth="2" />
    <circle cx="138" cy="1002" r="7" fill="#1d63d3" />
    <path d="M134 979H154M139 986 150 998" stroke="#2b6dae" strokeWidth="2" />
    <path d="M134 999 141 1003" stroke="#b7d5fb" strokeWidth="2" />
  </Drawing>
);

const menus: [string, number][] = [
  ["文件(F)", 110], ["编辑(E)", 111], ["视图(V)", 111], ["插入(I)", 106], ["格式(O)", 116], ["工具(T)", 110],
  ["绘图(D)", 114], ["标注(N)", 117], ["修改(M)", 119], ["参数(P)", 110], ["窗口(W)", 119], ["帮助(H)", 90],
];
const standardA = ["new", "open", "save", "|", "print", "preview", "publish", "globe", "|", "cut", "copy", "paste", "match", "blockedit", "|"];
const standardB = ["|", "hand", "zoomrt", "zoomwin", "zoomprev", "|", "props", "designcenter", "palette", "sheet", "markup", "calc", "|", "help"];
const draw = ["line", "xline", "pline", "polygon", "rect", "arc", "circle", "cloud", "spline", "ellipse", "ellipsearc", "insert", "block", "point", "hatch", "gradient", "region", "table", "mtext", "addsel"];
const modify = ["erase", "copyobj", "mirror", "offset", "array", "move", "rotate", "scale", "stretch", "trim", "extend", "breakpt", "breakobj", "join", "chamfer", "fillet", "blend", "explode"];
const order = ["orderA", "orderB", "orderC", "orderD"];

const Tools = ({ list }: { list: string[] }) => (
  <>{list.map((n, i) => (n === "|" ? <Sep key={i} /> : <Cell key={i}><Icon name={n} /></Cell>))}</>
);
const SideList = ({ list }: { list: string[] }) => (
  <>{list.map((n) => <SideCell key={n}><Icon name={n} /></SideCell>)}</>
);

export default function App() {
  return (
    <Window>
      <Global />
      <TitleBar>
        <TitleWhite $w={762}>AutoCAD 经典</TitleWhite>
        <TitleText>
          <TitleName>Autodesk AutoCAD 2014</TitleName>
          <span>道路模型.d...</span>
        </TitleText>
        <TitleWhite $w={781} />
        <WindowButtons>
          <MinButton />
          <MaxButton />
          <CloseButton>
            <svg width="14" height="13" viewBox="0 0 16 14" stroke="#fff" strokeWidth="4">
              <path d="m2 1 12 12M14 1 2 13" />
            </svg>
          </CloseButton>
        </WindowButtons>
      </TitleBar>

      <MenuBar>
        {menus.map(([t, w]) => <MenuItem key={t} $w={w}>{t}</MenuItem>)}
        <MdiButtons>
          <svg width="84" height="26" viewBox="0 0 84 26" fill="none" stroke="#2e2e2e">
            <path d="M5 18h18" strokeWidth="4" />
            <path d="M40 9V5h13v10h-4" strokeWidth="2.500" />
            <path d="M34 11h13v11H34z" strokeWidth="2.500" />
            <path d="M34 11h13M40 5h13" strokeWidth="4" />
            <path d="m65 6 12 14M77 6 65 20" strokeWidth="3.500" />
          </svg>
        </MdiButtons>
      </MenuBar>

      <TabStrip>
        <Tab w={296}>06凤栖路-平面-改8.27*</Tab>
        <Tab w={240} active>
          道路模型*
          <svg width="13" height="13" viewBox="0 0 13 13" stroke="#8a8a8a" strokeWidth="3">
            <path d="m1 1 11 11M12 1 1 12" />
          </svg>
        </Tab>
        <svg width="44" height="38" viewBox="0 0 44 38">
          <path d="M4 6h26q9 2 10 26H15Q5 28 4 6z" fill="#858585" stroke="#6b6b6b" strokeWidth="2.500" />
          <path d="m22 13 2 5 4 2-4 2-2 5-2-5-4-2 4-2z" fill="#b9b9b9" />
        </svg>
      </TabStrip>

      <ToolbarArea>
        <ToolbarRow>
          <Grip $w={14} />
          <Bar $w={1116}>
            <Tools list={standardA} />
            <Cell $w={42}><Icon name="undo" /></Cell>
            <Cell $w={20}><SmallArrow /></Cell>
            <Cell $w={42}><Icon name="redo" /></Cell>
            <Cell $w={21}><SmallArrow /></Cell>
            <Tools list={standardB} />
          </Bar>
          <Grip $w={20} />
          <Bar $w={1034}>
            <Cell $w={41}><Icon name="textstyle" /></Cell>
            <Combo $w={209} $pad={31}>Standard<Down /></Combo>
            <Sep $w={9} />
            <Cell $w={43}><Icon name="dimstyle" /></Cell>
            <Combo $w={210} $pad={31}>ISO-25<Down /></Combo>
            <Sep $w={9} />
            <Cell $w={43}><Icon name="tablestyle" /></Cell>
            <Combo $w={209} $pad={7}>Standard<Down /></Combo>
            <Sep $w={9} />
            <Cell $w={44}><Icon name="mleader" /></Cell>
            <Combo $w={208} $pad={31}>Standard<Down /></Combo>
          </Bar>
        </ToolbarRow>
        <ToolbarRow>
          <Grip $w={14} />
          <Bar $w={387}>
            <Combo $w={307} $pad={15}>AutoCAD 经典<Down /></Combo>
            <Cell><Icon name="gear" /></Cell>
            <Cell><Icon name="homews" /></Cell>
          </Bar>
          <Grip $w={18} />
          <Bar $w={688}>
            <Cell $w={41}><Icon name="layerprops" /></Cell>
            <Combo $w={526} $pad={5}>
              <Cell $w={28}><Icon name="bulb" /></Cell>
              <Cell $w={28}><Icon name="sun" /></Cell>
              <Cell $w={31}><Icon name="freeze" /></Cell>
              <Cell $w={32}><Icon name="unlock" /></Cell>
              <Swatch />
              0
              <Down />
            </Combo>
            <Cell><Icon name="layercurrent" /></Cell>
            <Cell><Icon name="layerprev" /></Cell>
            <Cell $w={39}><Icon name="layerstate" /></Cell>
          </Bar>
          <Grip $w={18} />
          <Bar $w={1005}>
            <Combo $w={264} $pad={9} $serif><Swatch />ByLayer<Down /></Combo>
            <Sep $w={11} />
            <Combo $w={280} $pad={7} $serif><LineSample $w={105} />ByLayer<Down /></Combo>
            <Sep $w={9} />
            <Combo $w={221} $pad={9} $serif><LineSample $w={62} />ByLayer<Down /></Combo>
            <Sep $w={11} />
            <Combo $w={209} $pad={16} $serif>ByColor<Down /></Combo>
          </Bar>
        </ToolbarRow>
      </ToolbarArea>

      <Workspace>
        <SideBar $w={50} $inset={1}>
          <SideGrip $h={16} />
          <SideTools $h={771}><SideList list={draw} /></SideTools>
        </SideBar>
        <Center>
          <ViewRow>
            <Viewport>
              <RoadModel />
              <ViewLabel>[−][自定义视图][概念]</ViewLabel>
              <CubeFace>上</CubeFace>
              <UcsTag>未命名</UcsTag>
            </Viewport>
            <VScroll>
              <Arrow width="16" height="12" fill="none" stroke="#555" strokeWidth="3"><path d="m2 10 6-7 6 7" /></Arrow>
              <VThumb />
              <Arrow width="16" height="12" fill="none" stroke="#555" strokeWidth="3"><path d="m2 2 6 7 6-7" /></Arrow>
            </VScroll>
          </ViewRow>
          <BottomRow>
            {["M8 5v14M20 5v14l-9-7z", "M18 5v14l-9-7z", "M8 5v14l9-7z", "M17 5v14M5 5v14l9-7z"].map((d) => (
              <NavButton key={d}>
                <svg width="24" height="24" fill="#777" stroke="#777" strokeWidth="1.500"><path d={d} /></svg>
              </NavButton>
            ))}
            <LayoutTab $w={80} $model>模型</LayoutTab>
            <LayoutTab $w={66}>布局1</LayoutTab>
            <Slash width="16" height="26" stroke="#555" strokeWidth="2"><path d="M14 1 3 25" /></Slash>
            <LayoutTab $w={63}>布局2</LayoutTab>
            <Slash width="16" height="26" stroke="#555" strokeWidth="2"><path d="M14 1 3 25" /></Slash>
            <HScroll>
              <Arrow width="12" height="16" fill="none" stroke="#555" strokeWidth="3"><path d="m9 2-6 6 6 6" /></Arrow>
              <HThumb />
              <Arrow width="12" height="16" fill="none" stroke="#555" strokeWidth="3"><path d="m3 2 6 6-6 6" /></Arrow>
            </HScroll>
          </BottomRow>
        </Center>
        <SideBar $w={51} $inset={9}>
          <SideGrip $h={16} />
          <SideTools $h={693}><SideList list={modify} /></SideTools>
          <SideGrip $h={19} />
          <SideTools $h={141}><SideList list={order} /></SideTools>
          <SideFoot />
        </SideBar>
      </Workspace>

      <AppButton>
        <svg width="62" height="62" viewBox="0 0 62 62">
          <path d="M23 2 38 47Q40 50 42 50 39 58 34 55 30 50 31 46H13Q14 52 9 56 4 57 2 50 5 51 7 46z" fill="#b52c15" />
          <path d="M23 2 7 46Q5 51 2 50L16 32z" fill="#e0553a" />
          <path d="M23 2 16 32 28 28z" fill="#f0583a" />
          <path d="M28 28 38 47Q40 50 42 50 41 44 23 2z" fill="#d63d1f" />
          <path d="m13 46 5-11h8l5 11z" fill="#861c0e" />
          <path d="M48 26h12l-6 8z" fill="#444" />
        </svg>
      </AppButton>
      <GreenMark width="50" height="20">
        <path d="M4 12Q20 4 42 1v18H8z" fill="#3fae25" />
        <path d="M15 14q9-3 20-4v10H18z" fill="#fff" />
      </GreenMark>
    </Window>
  );
}
